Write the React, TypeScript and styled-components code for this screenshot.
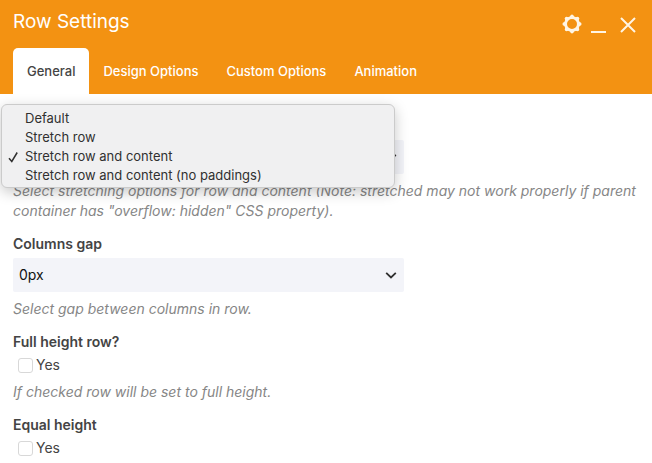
import React from "react";
import styled, { createGlobalStyle } from "styled-components";

const GlobalStyle = createGlobalStyle`
  *, *::before, *::after { box-sizing: border-box; }
  body {
    margin: 0;
    background: #fff;
    color: #444;
    font-family: Inter, "Liberation Sans", sans-serif;
    font-size: 14px;
    line-height: 20px;
  }
  button, select, input { font: inherit; }
`;

const Header = styled.header`
  background: #f39212;
  color: #fff;
  padding: 8px 13px 0;
`;

const TitleBar = styled.div`
  display: flex;
  justify-content: space-between;
  align-items: center;
  height: 32px;
  margin-bottom: 8px;
`;

const Title = styled.h1`
  margin: 0 0 4px;
  font-size: 19px;
  line-height: 24px;
  font-weight: 400;
`;

const Controls = styled.div`
  display: flex;
  gap: 8px;
  margin-right: 1px;
`;

const IconButton = styled.button`
  display: grid;
  place-items: center;
  width: 20px;
  height: 20px;
  padding: 0;
  border: 0;
  background: none;
  color: #fff5e4;
`;

const Tabs = styled.nav`
  display: flex;
`;

const Tab = styled.button<{ $active?: boolean }>`
  height: 46px;
  padding: 0 14px;
  border: 0;
  border-radius: 5px 5px 0 0;
  background: ${(p) => (p.$active ? "#fff" : "transparent")};
  color: ${(p) => (p.$active ? "#444" : "#fff")};
  font-size: 13px;
  font-weight: 500;
  white-space: nowrap;
`;

const Panel = styled.main`
  display: flex;
  flex-direction: column;
  gap: 13px;
  padding: 46px 13px 4px;
`;

const Field = styled.section`
  position: relative;
`;

const Label = styled.label`
  display: block;
  margin-bottom: 4px;
  font-weight: 600;
`;

const Hint = styled.p`
  margin: 7px 0 0;
  color: #868686;
  font-style: italic;
`;

const SelectWrap = styled.div`
  display: grid;
  align-items: center;
  width: 62.5%;
  svg {
    grid-area: 1 / 1;
    justify-self: end;
    margin-right: 7px;
    pointer-events: none;
  }
`;

const Select = styled.select`
  grid-area: 1 / 1;
  width: 100%;
  height: 34px;
  padding: 0 24px 0 6px;
  border: 0;
  border-radius: 2px;
  appearance: none;
  background: #f3f4f9;
  color: #111;
`;

const Menu = styled.ul`
  position: absolute;
  z-index: 1;
  left: -12px;
  bottom: -14px;
  width: 63%;
  margin: 0;
  padding: 4px 0 2px;
  list-style: none;
  border: 1px solid #cbcbcb;
  border-radius: 6px;
  background: #f0f0f1;
  box-shadow: 0 4px 14px rgba(0, 0, 0, 0.22);
`;

const MenuItem = styled.button`
  display: grid;
  grid-template-columns: 18px 1fr;
  align-items: center;
  width: 100%;
  height: 19px;
  padding: 0 5px;
  border: 0;
  background: none;
  color: #303030;
  font-size: 13px;
  line-height: 19px;
  text-align: left;
  white-space: nowrap;
  svg { display: block; }
`;

const CheckLabel = styled.label`
  display: flex;
  align-items: center;
  gap: 3px;
  padding-left: 5px;
`;

const Checkbox = styled.input`
  width: 15px;
  height: 15px;
  margin: 0;
  border: 1px solid #d8d8d8;
  border-radius: 3px;
  appearance: none;
  background: #fff;
  &:checked { background: #f39212; }
`;

const GroupLabel = styled.h2`
  margin: 0 0 3px;
  font-size: 14px;
  line-height: 20px;
  font-weight: 600;
`;

const Chevron = () => (
  <svg width="12" height="8" viewBox="0 0 12 8" fill="none" stroke="#303030" strokeWidth="1.8" aria-hidden="true">
    <path d="M1.2 1.8 6 6.5l4.8-4.7" />
  </svg>
);

const Gear = () => {
  const teeth = Array.from({ length: 8 }, (_, i) => i * 45);
  return (
    <svg width="20" height="20" viewBox="0 0 20 20" aria-hidden="true">
      <circle cx="10" cy="10" r="6.4" fill="none" stroke="currentColor" strokeWidth="2.8" />
      {teeth.map((a) => (
        <path key={a} d="M7.3 3.6 8.8.9Q10 0 11.2.9l1.5 2.7Z" fill="currentColor" transform={`rotate(${a} 10 10)`} />
      ))}
    </svg>
  );
};

const options = ["Default", "Stretch row", "Stretch row and content", "Stretch row and content (no paddings)"];
const tabs = ["General", "Design Options", "Custom Options", "Animation"];

export default function App() {
  const [tab, setTab] = React.useState(tabs[0]);
  const [stretch, setStretch] = React.useState(options[2]);
  return (
    <>
      <GlobalStyle />
      <Header>
        <TitleBar>
          <Title>Row Settings</Title>
          <Controls>
            <IconButton aria-label="Settings"><Gear /></IconButton>
            <IconButton aria-label="Minimize">
              <svg width="20" height="20" viewBox="0 0 20 20" stroke="currentColor" strokeWidth="2" aria-hidden="true">
                <path d="M1 18h15" />
              </svg>
            </IconButton>
            <IconButton aria-label="Close">
              <svg width="20" height="20" viewBox="0 0 20 20" stroke="currentColor" strokeWidth="2" aria-hidden="true">
                <path d="m3 4 14 14M17 4 3 18" />
              </svg>
            </IconButton>
          </Controls>
        </TitleBar>
        <Tabs>
          {tabs.map((t) => (
            <Tab key={t} type="button" $active={t === tab} onClick={() => setTab(t)}>{t}</Tab>
          ))}
        </Tabs>
      </Header>
      <Panel>
        <Field>
          <Field>
            <SelectWrap>
              <Select aria-label="Row stretch" value={stretch} onChange={(e) => setStretch(e.target.value)}>
                {options.map((o) => <option key={o}>{o}</option>)}
              </Select>
              <Chevron />
            </SelectWrap>
            <Menu>
              {options.map((o) => (
                <li key={o}>
                  <MenuItem type="button" onClick={() => setStretch(o)}>
                    <span>
                      {o === stretch && (
                        <svg width="12" height="12" viewBox="0 0 12 12" fill="none" stroke="#303030" strokeWidth="1.5" aria-hidden="true">
                          <path d="m2 7.2 2.8 3.3L10.2 1.5" />
                        </svg>
                      )}
                    </span>
                    {o}
                  </MenuItem>
                </li>
              ))}
            </Menu>
          </Field>
          <Hint>
            Select stretching options for row and content (Note: stretched may not work properly if parent
            container has "overflow: hidden" CSS property).
          </Hint>
        </Field>
        <Field>
          <Label htmlFor="gap">Columns gap</Label>
          <SelectWrap>
            <Select id="gap"><option>0px</option></Select>
            <Chevron />
          </SelectWrap>
          <Hint>Select gap between columns in row.</Hint>
        </Field>
        <Field>
          <GroupLabel>Full height row?</GroupLabel>
          <CheckLabel><Checkbox type="checkbox" />Yes</CheckLabel>
          <Hint>If checked row will be set to full height.</Hint>
        </Field>
        <Field>
          <GroupLabel>Equal height</GroupLabel>
          <CheckLabel><Checkbox type="checkbox" />Yes</CheckLabel>
        </Field>
      </Panel>
    </>
  );
}
